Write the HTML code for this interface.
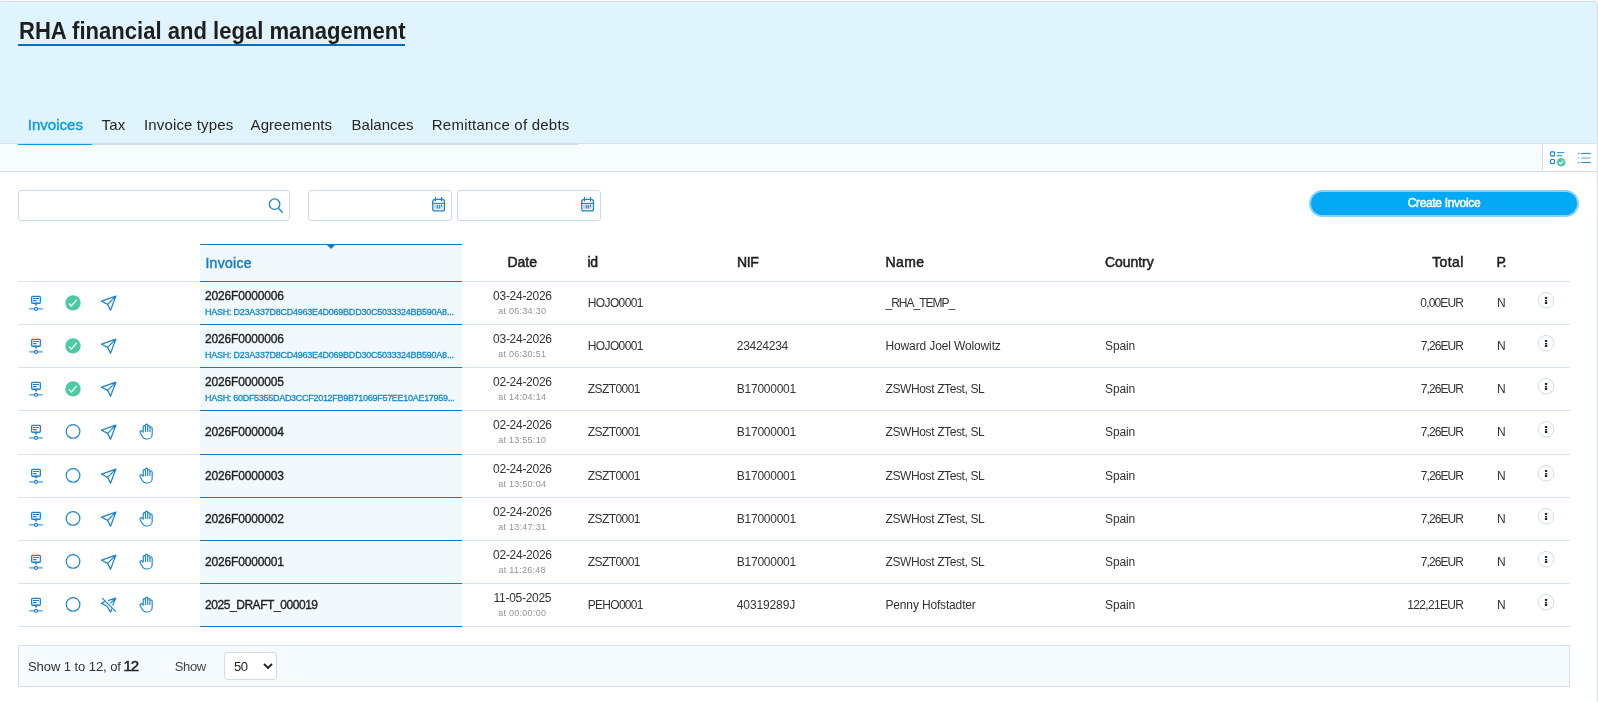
<!DOCTYPE html>
<html><head><meta charset="utf-8">
<style>
*{box-sizing:border-box;margin:0;padding:0}
html,body{width:1598px;height:702px;overflow:hidden;background:#fff;font-family:"Liberation Sans",sans-serif;color:#333}
.t{position:absolute;white-space:nowrap}
.b{position:absolute}
.s{position:absolute;overflow:visible}
#wrap{position:absolute;left:0;top:0;width:1598px;height:702px;will-change:transform}
</style></head><body><div id="wrap">
<div class="b" style="left:0;top:0;width:1598px;height:1px;background:#f7f8f8"></div>
<div class="b" style="left:-1px;top:1px;width:1599px;height:720px;border:1px solid #d3ddeb;border-radius:3px"></div>
<div class="b" style="left:0;top:2px;width:1597px;height:142px;background:#e0f4fd;border-radius:2px 2px 0 0"></div>
<div class="b" style="left:0;top:144px;width:1597px;height:27px;background:#f7fcff"></div>
<div class="b" style="left:0;top:171px;width:1597px;height:1px;background:#d3ddeb"></div>
<div class="b" style="left:1542px;top:144px;width:55px;height:27px;background:#fff;border-left:1px solid #d3ddeb"></div>
<div class="t" style="top:18.68px;font-size:24px;line-height:24px;font-weight:bold;color:#1e1e1e;left:19px;transform:scaleX(0.919);transform-origin:0 0;">RHA financial and legal management</div>
<div class="b" style="left:18px;top:44px;width:387px;height:2px;background:#0b6ebc"></div>
<div class="b" style="left:0;top:143px;width:1597px;height:1px;background:#d8e1ee"></div>
<div class="b" style="left:18px;top:143px;width:560px;height:2px;background:#d3deec"></div>
<div class="b" style="left:18px;top:144px;width:74px;height:1px;background:#119be4"></div>
<div class="b" style="left:18px;top:145px;width:74px;height:1px;background:#fff"></div>
<div class="t" style="top:117.00px;font-size:15px;line-height:15px;-webkit-text-stroke:0.45px #119be4;color:#119be4;letter-spacing:0.04px;left:27.7px;">Invoices</div>
<div class="t" style="top:117.00px;font-size:15px;line-height:15px;color:#262626;letter-spacing:0.1px;left:101.6px;">Tax</div>
<div class="t" style="top:117.00px;font-size:15px;line-height:15px;color:#262626;letter-spacing:0.14px;left:144px;">Invoice types</div>
<div class="t" style="top:117.00px;font-size:15px;line-height:15px;color:#262626;letter-spacing:0.06px;left:250.6px;">Agreements</div>
<div class="t" style="top:117.00px;font-size:15px;line-height:15px;color:#262626;letter-spacing:0.04px;left:351.5px;">Balances</div>
<div class="t" style="top:117.00px;font-size:15px;line-height:15px;color:#262626;letter-spacing:0.23px;left:431.8px;">Remittance of debts</div>
<svg class="s" style="left:1548px;top:149px" width="18" height="18" viewBox="0 0 18 18"><rect x="2.5" y="2.9" width="4" height="4" rx="0.9" fill="none" stroke="#1a84cf" stroke-width="1.2"/><rect x="2.5" y="10.5" width="4" height="4" rx="0.9" fill="none" stroke="#1a84cf" stroke-width="1.2"/><path d="M9 3.7 H16.3 M9 6.7 H14" stroke="#1a84cf" stroke-width="1"/><circle cx="13.1" cy="13.2" r="4.3" fill="#4ccaa3"/><path d="M10.9 13.3 L12.5 14.9 L15.3 11.8" fill="none" stroke="#fff" stroke-width="1.3"/></svg>
<svg class="s" style="left:1576px;top:149px" width="18" height="18" viewBox="0 0 18 18"><path d="M2 4.4 H3.3 M2 13.5 H3.3" stroke="#1a84cf" stroke-width="1"/><path d="M5.3 4.4 H14.7 M5.3 13.5 H14.7" stroke="#1a84cf" stroke-width="1"/><path d="M2 9 H3.3 M5.3 9 H14.7" stroke="#5aa8e0" stroke-width="1"/></svg>
<div class="b" style="left:18px;top:190px;width:272px;height:31px;border:1px solid #c9d9ef;border-radius:3px;background:#fff"></div>
<svg class="s" style="left:267px;top:197px" width="18" height="18" viewBox="0 0 18 18"><circle cx="7.6" cy="7.2" r="5.25" fill="none" stroke="#1a84cf" stroke-width="1.3"/><path d="M11.6 11.6 L15.7 15.7" stroke="#1a84cf" stroke-width="1.4"/></svg>
<div class="b" style="left:308px;top:190px;width:144px;height:31px;border:1px solid #c9d9ef;border-radius:3px;background:#fff"></div>
<svg class="s" style="left:430px;top:196px" width="17" height="17" viewBox="0 0 17 17"><rect x="2.75" y="3.35" width="11.7" height="11.6" rx="2.3" fill="none" stroke="#1a84cf" stroke-width="1.3"/><path d="M5.5 1.1 V5.5 M11.5 1.1 V5.5" stroke="#1a84cf" stroke-width="1.2"/><path d="M2.5 7.4 H14.7" stroke="#1a84cf" stroke-width="1.1"/><rect x="3.6" y="8.7" width="9.1" height="4" fill="#b5d8f1"/><path d="M7.4 8.7 V12.7 M9.4 8.7 V12.7 M11.5 8.7 V10.8" stroke="#1a84cf" stroke-width="0.9"/></svg>
<div class="b" style="left:457px;top:190px;width:144px;height:31px;border:1px solid #c9d9ef;border-radius:3px;background:#fff"></div>
<svg class="s" style="left:579px;top:196px" width="17" height="17" viewBox="0 0 17 17"><rect x="2.75" y="3.35" width="11.7" height="11.6" rx="2.3" fill="none" stroke="#1a84cf" stroke-width="1.3"/><path d="M5.5 1.1 V5.5 M11.5 1.1 V5.5" stroke="#1a84cf" stroke-width="1.2"/><path d="M2.5 7.4 H14.7" stroke="#1a84cf" stroke-width="1.1"/><rect x="3.6" y="8.7" width="9.1" height="4" fill="#b5d8f1"/><path d="M7.4 8.7 V12.7 M9.4 8.7 V12.7 M11.5 8.7 V10.8" stroke="#1a84cf" stroke-width="0.9"/></svg>
<div class="b" style="left:1309px;top:190px;width:270px;height:27px;border-radius:14px;background:#03a9f4;border:2px solid #86d3f9"></div>
<div class="t" style="top:196.84px;font-size:12px;line-height:12px;-webkit-text-stroke:0.5px #fff;color:#fff;letter-spacing:-0.35px;left:1294px;width:300px;text-align:center;">Create Invoice</div>
<div class="b" style="left:200px;top:244px;width:262px;height:383px;background:#f1f9fd"></div>
<div class="b" style="left:200px;top:244px;width:262px;height:1px;background:#1b78c0"></div>
<div class="b" style="left:18px;top:281px;width:182px;height:1px;background:#d7e2f2"></div>
<div class="b" style="left:200px;top:281px;width:262px;height:1px;background:#1b78c0"></div>
<div class="b" style="left:462px;top:281px;width:1108px;height:1px;background:#d7e2f2"></div>
<div class="b" style="left:18px;top:324px;width:182px;height:1px;background:#d7e2f2"></div>
<div class="b" style="left:200px;top:324px;width:262px;height:1px;background:#1b78c0"></div>
<div class="b" style="left:462px;top:324px;width:1108px;height:1px;background:#d7e2f2"></div>
<div class="b" style="left:18px;top:367px;width:182px;height:1px;background:#d7e2f2"></div>
<div class="b" style="left:200px;top:367px;width:262px;height:1px;background:#1b78c0"></div>
<div class="b" style="left:462px;top:367px;width:1108px;height:1px;background:#d7e2f2"></div>
<div class="b" style="left:18px;top:410px;width:182px;height:1px;background:#d7e2f2"></div>
<div class="b" style="left:200px;top:410px;width:262px;height:1px;background:#1b78c0"></div>
<div class="b" style="left:462px;top:410px;width:1108px;height:1px;background:#d7e2f2"></div>
<div class="b" style="left:18px;top:454px;width:182px;height:1px;background:#d7e2f2"></div>
<div class="b" style="left:200px;top:454px;width:262px;height:1px;background:#1b78c0"></div>
<div class="b" style="left:462px;top:454px;width:1108px;height:1px;background:#d7e2f2"></div>
<div class="b" style="left:18px;top:497px;width:182px;height:1px;background:#d7e2f2"></div>
<div class="b" style="left:200px;top:497px;width:262px;height:1px;background:#1b78c0"></div>
<div class="b" style="left:462px;top:497px;width:1108px;height:1px;background:#d7e2f2"></div>
<div class="b" style="left:18px;top:540px;width:182px;height:1px;background:#d7e2f2"></div>
<div class="b" style="left:200px;top:540px;width:262px;height:1px;background:#1b78c0"></div>
<div class="b" style="left:462px;top:540px;width:1108px;height:1px;background:#d7e2f2"></div>
<div class="b" style="left:18px;top:583px;width:182px;height:1px;background:#d7e2f2"></div>
<div class="b" style="left:200px;top:583px;width:262px;height:1px;background:#1b78c0"></div>
<div class="b" style="left:462px;top:583px;width:1108px;height:1px;background:#d7e2f2"></div>
<div class="b" style="left:18px;top:626px;width:182px;height:1px;background:#d7e2f2"></div>
<div class="b" style="left:200px;top:626px;width:262px;height:1px;background:#1b78c0"></div>
<div class="b" style="left:462px;top:626px;width:1108px;height:1px;background:#d7e2f2"></div>
<div class="b" style="left:327px;top:245px;width:0;height:0;border-left:4px solid transparent;border-right:4px solid transparent;border-top:4px solid #1b78c0"></div>
<div class="t" style="top:255.95px;font-size:14px;line-height:14px;-webkit-text-stroke:0.5px #1b7ec4;color:#1b7ec4;letter-spacing:0.3px;left:205.4px;">Invoice</div>
<div class="t" style="top:255.15px;font-size:14px;line-height:14px;-webkit-text-stroke:0.5px #222;color:#222;left:372.20000000000005px;width:300px;text-align:center;">Date</div>
<div class="t" style="top:255.15px;font-size:14px;line-height:14px;-webkit-text-stroke:0.5px #222;color:#222;letter-spacing:-0.3px;left:587.5px;">id</div>
<div class="t" style="top:255.15px;font-size:14px;line-height:14px;-webkit-text-stroke:0.5px #222;color:#222;letter-spacing:-0.35px;left:737px;">NIF</div>
<div class="t" style="top:255.15px;font-size:14px;line-height:14px;-webkit-text-stroke:0.5px #222;color:#222;letter-spacing:0.4px;left:885.6px;">Name</div>
<div class="t" style="top:255.15px;font-size:14px;line-height:14px;-webkit-text-stroke:0.5px #222;color:#222;letter-spacing:-0.05px;left:1105px;">Country</div>
<div class="t" style="top:255.15px;font-size:14px;line-height:14px;-webkit-text-stroke:0.5px #222;color:#222;letter-spacing:0.38px;right:134.30px;">Total</div>
<div class="t" style="top:255.15px;font-size:14px;line-height:14px;-webkit-text-stroke:0.5px #222;color:#222;letter-spacing:-1.5px;left:1496.5px;">P.</div>
<svg class="s" style="left:28px;top:293.00px" width="20" height="20" viewBox="0 0 20 20"><rect x="3.65" y="3.35" width="8.7" height="6.9" rx="0.9" fill="none" stroke="#1a84cf" stroke-width="1.3"/><path d="M6.3 10.2 L8 12.6 L9.7 10.2 Z" fill="#1a84cf" stroke="#1a84cf" stroke-width="0.6" stroke-linejoin="round"/><path d="M5 5.5 H10.9 M5 7.6 H8.7" stroke="#1a84cf" stroke-width="1.1"/><path d="M1.1 15.9 H6.5 M9.5 15.9 H14.9" stroke="#1a84cf" stroke-width="1.4" opacity="0.8"/><circle cx="8" cy="15.9" r="1.45" fill="none" stroke="#1a84cf" stroke-width="1.2"/></svg>
<svg class="s" style="left:65px;top:293.00px" width="20" height="20" viewBox="0 0 20 20"><circle cx="8" cy="9.9" r="7.7" fill="#4ccaa3"/><path d="M4.05 10.6 L6.4 13 L11.7 6.8" fill="none" stroke="#fff" stroke-width="1.3"/></svg>
<svg class="s" style="left:100px;top:293.00px" width="20" height="20" viewBox="0 0 20 20"><path d="M15.9 3.1 L1.6 8.2 L7.6 11.4 L10.5 17.2 Z M7.6 11.4 L15.9 3.1" fill="none" stroke="#1a84cf" stroke-width="1.25" stroke-linejoin="round"/></svg>
<div class="t" style="top:290.44px;font-size:12px;line-height:12px;-webkit-text-stroke:0.35px #222;color:#222;letter-spacing:-0.16px;left:205px;">2026F0000006</div>
<div class="t" style="top:307.58px;font-size:9px;line-height:9px;-webkit-text-stroke:0.3px #1a87cf;color:#1a87cf;letter-spacing:-0.24px;left:205px;">HASH: D23A337D8CD4963E4D069BDD30C5033324BB590A8...</div>
<div class="t" style="top:289.54px;font-size:12px;line-height:12px;color:#333;letter-spacing:-0.28px;left:372.4px;width:300px;text-align:center;">03-24-2026</div>
<div class="t" style="top:306.78px;font-size:9px;line-height:9px;color:#939393;letter-spacing:0.27px;left:372.20000000000005px;width:300px;text-align:center;">at 06:34:30</div>
<div class="t" style="top:297.24px;font-size:12px;line-height:12px;color:#333;letter-spacing:-0.6px;left:587.7px;">HOJO0001</div>
<div class="t" style="top:297.24px;font-size:12px;line-height:12px;color:#333;letter-spacing:-1.0px;left:885.5px;">_RHA_TEMP_</div>
<div class="t" style="top:297.24px;font-size:12px;line-height:12px;color:#333;letter-spacing:-0.83px;right:134.83px;">0,00EUR</div>
<div class="t" style="top:297.24px;font-size:12px;line-height:12px;color:#333;left:1497px;">N</div>
<svg class="s" style="left:1536px;top:290px" width="20" height="20" viewBox="0 0 20 20"><circle cx="10" cy="10.3" r="7.75" fill="none" stroke="#cddbee" stroke-width="1"/><rect x="8.9" y="7" width="2.3" height="2" rx="0.4" fill="#222"/><rect x="8.9" y="10" width="2.3" height="1.6" rx="0.4" fill="#222"/><rect x="8.9" y="12.1" width="2.3" height="2" rx="0.4" fill="#222"/></svg>
<svg class="s" style="left:28px;top:336.00px" width="20" height="20" viewBox="0 0 20 20"><rect x="3.65" y="3.35" width="8.7" height="6.9" rx="0.9" fill="none" stroke="#1a84cf" stroke-width="1.3"/><path d="M6.3 10.2 L8 12.6 L9.7 10.2 Z" fill="#1a84cf" stroke="#1a84cf" stroke-width="0.6" stroke-linejoin="round"/><path d="M5 5.5 H10.9 M5 7.6 H8.7" stroke="#1a84cf" stroke-width="1.1"/><path d="M1.1 15.9 H6.5 M9.5 15.9 H14.9" stroke="#1a84cf" stroke-width="1.4" opacity="0.8"/><circle cx="8" cy="15.9" r="1.45" fill="none" stroke="#1a84cf" stroke-width="1.2"/></svg>
<svg class="s" style="left:65px;top:336.00px" width="20" height="20" viewBox="0 0 20 20"><circle cx="8" cy="9.9" r="7.7" fill="#4ccaa3"/><path d="M4.05 10.6 L6.4 13 L11.7 6.8" fill="none" stroke="#fff" stroke-width="1.3"/></svg>
<svg class="s" style="left:100px;top:336.00px" width="20" height="20" viewBox="0 0 20 20"><path d="M15.9 3.1 L1.6 8.2 L7.6 11.4 L10.5 17.2 Z M7.6 11.4 L15.9 3.1" fill="none" stroke="#1a84cf" stroke-width="1.25" stroke-linejoin="round"/></svg>
<div class="t" style="top:333.44px;font-size:12px;line-height:12px;-webkit-text-stroke:0.35px #222;color:#222;letter-spacing:-0.16px;left:205px;">2026F0000006</div>
<div class="t" style="top:350.58px;font-size:9px;line-height:9px;-webkit-text-stroke:0.3px #1a87cf;color:#1a87cf;letter-spacing:-0.24px;left:205px;">HASH: D23A337D8CD4963E4D069BDD30C5033324BB590A8...</div>
<div class="t" style="top:332.54px;font-size:12px;line-height:12px;color:#333;letter-spacing:-0.28px;left:372.4px;width:300px;text-align:center;">03-24-2026</div>
<div class="t" style="top:349.78px;font-size:9px;line-height:9px;color:#939393;letter-spacing:0.27px;left:372.20000000000005px;width:300px;text-align:center;">at 06:30:51</div>
<div class="t" style="top:340.24px;font-size:12px;line-height:12px;color:#333;letter-spacing:-0.6px;left:587.7px;">HOJO0001</div>
<div class="t" style="top:340.24px;font-size:12px;line-height:12px;color:#333;letter-spacing:-0.28px;left:736.8px;">23424234</div>
<div class="t" style="top:340.24px;font-size:12px;line-height:12px;color:#333;letter-spacing:-0.13px;left:885.5px;">Howard Joel Wolowitz</div>
<div class="t" style="top:340.24px;font-size:12px;line-height:12px;color:#333;letter-spacing:-0.1px;left:1105px;">Spain</div>
<div class="t" style="top:340.24px;font-size:12px;line-height:12px;color:#333;letter-spacing:-0.9px;right:134.90px;">7,26EUR</div>
<div class="t" style="top:340.24px;font-size:12px;line-height:12px;color:#333;left:1497px;">N</div>
<svg class="s" style="left:1536px;top:333px" width="20" height="20" viewBox="0 0 20 20"><circle cx="10" cy="10.3" r="7.75" fill="none" stroke="#cddbee" stroke-width="1"/><rect x="8.9" y="7" width="2.3" height="2" rx="0.4" fill="#222"/><rect x="8.9" y="10" width="2.3" height="1.6" rx="0.4" fill="#222"/><rect x="8.9" y="12.1" width="2.3" height="2" rx="0.4" fill="#222"/></svg>
<svg class="s" style="left:28px;top:379.00px" width="20" height="20" viewBox="0 0 20 20"><rect x="3.65" y="3.35" width="8.7" height="6.9" rx="0.9" fill="none" stroke="#1a84cf" stroke-width="1.3"/><path d="M6.3 10.2 L8 12.6 L9.7 10.2 Z" fill="#1a84cf" stroke="#1a84cf" stroke-width="0.6" stroke-linejoin="round"/><path d="M5 5.5 H10.9 M5 7.6 H8.7" stroke="#1a84cf" stroke-width="1.1"/><path d="M1.1 15.9 H6.5 M9.5 15.9 H14.9" stroke="#1a84cf" stroke-width="1.4" opacity="0.8"/><circle cx="8" cy="15.9" r="1.45" fill="none" stroke="#1a84cf" stroke-width="1.2"/></svg>
<svg class="s" style="left:65px;top:379.00px" width="20" height="20" viewBox="0 0 20 20"><circle cx="8" cy="9.9" r="7.7" fill="#4ccaa3"/><path d="M4.05 10.6 L6.4 13 L11.7 6.8" fill="none" stroke="#fff" stroke-width="1.3"/></svg>
<svg class="s" style="left:100px;top:379.00px" width="20" height="20" viewBox="0 0 20 20"><path d="M15.9 3.1 L1.6 8.2 L7.6 11.4 L10.5 17.2 Z M7.6 11.4 L15.9 3.1" fill="none" stroke="#1a84cf" stroke-width="1.25" stroke-linejoin="round"/></svg>
<div class="t" style="top:376.44px;font-size:12px;line-height:12px;-webkit-text-stroke:0.35px #222;color:#222;letter-spacing:-0.16px;left:205px;">2026F0000005</div>
<div class="t" style="top:393.58px;font-size:9px;line-height:9px;-webkit-text-stroke:0.3px #1a87cf;color:#1a87cf;letter-spacing:-0.29px;left:205px;">HASH: 60DF5355DAD3CCF2012FB9B71069F57EE10AE17959...</div>
<div class="t" style="top:375.54px;font-size:12px;line-height:12px;color:#333;letter-spacing:-0.28px;left:372.4px;width:300px;text-align:center;">02-24-2026</div>
<div class="t" style="top:392.78px;font-size:9px;line-height:9px;color:#939393;letter-spacing:0.27px;left:372.20000000000005px;width:300px;text-align:center;">at 14:04:14</div>
<div class="t" style="top:383.24px;font-size:12px;line-height:12px;color:#333;letter-spacing:-0.55px;left:587.7px;">ZSZT0001</div>
<div class="t" style="top:383.24px;font-size:12px;line-height:12px;color:#333;letter-spacing:-0.25px;left:736.8px;">B17000001</div>
<div class="t" style="top:383.24px;font-size:12px;line-height:12px;color:#333;letter-spacing:-0.38px;left:885.5px;">ZSWHost ZTest, SL</div>
<div class="t" style="top:383.24px;font-size:12px;line-height:12px;color:#333;letter-spacing:-0.1px;left:1105px;">Spain</div>
<div class="t" style="top:383.24px;font-size:12px;line-height:12px;color:#333;letter-spacing:-0.9px;right:134.90px;">7,26EUR</div>
<div class="t" style="top:383.24px;font-size:12px;line-height:12px;color:#333;left:1497px;">N</div>
<svg class="s" style="left:1536px;top:376px" width="20" height="20" viewBox="0 0 20 20"><circle cx="10" cy="10.3" r="7.75" fill="none" stroke="#cddbee" stroke-width="1"/><rect x="8.9" y="7" width="2.3" height="2" rx="0.4" fill="#222"/><rect x="8.9" y="10" width="2.3" height="1.6" rx="0.4" fill="#222"/><rect x="8.9" y="12.1" width="2.3" height="2" rx="0.4" fill="#222"/></svg>
<svg class="s" style="left:28px;top:422.00px" width="20" height="20" viewBox="0 0 20 20"><rect x="3.65" y="3.35" width="8.7" height="6.9" rx="0.9" fill="none" stroke="#1a84cf" stroke-width="1.3"/><path d="M6.3 10.2 L8 12.6 L9.7 10.2 Z" fill="#1a84cf" stroke="#1a84cf" stroke-width="0.6" stroke-linejoin="round"/><path d="M5 5.5 H10.9 M5 7.6 H8.7" stroke="#1a84cf" stroke-width="1.1"/><path d="M1.1 15.9 H6.5 M9.5 15.9 H14.9" stroke="#1a84cf" stroke-width="1.4" opacity="0.8"/><circle cx="8" cy="15.9" r="1.45" fill="none" stroke="#1a84cf" stroke-width="1.2"/></svg>
<svg class="s" style="left:65px;top:422.00px" width="20" height="20" viewBox="0 0 20 20"><circle cx="8.05" cy="9.4" r="6.85" fill="none" stroke="#1a84cf" stroke-width="1.2"/></svg>
<svg class="s" style="left:100px;top:422.00px" width="20" height="20" viewBox="0 0 20 20"><path d="M15.9 3.1 L1.6 8.2 L7.6 11.4 L10.5 17.2 Z M7.6 11.4 L15.9 3.1" fill="none" stroke="#1a84cf" stroke-width="1.25" stroke-linejoin="round"/></svg>
<svg class="s" style="left:137px;top:422.00px" width="20" height="20" viewBox="0 0 20 20"><g transform="translate(0.26,0.57) scale(0.745)"><path d="M8 13v-7.5a1.5 1.5 0 0 1 3 0v6.5M11 5.5v-2a1.5 1.5 0 1 1 3 0v8.5M14 5.5a1.5 1.5 0 0 1 3 0v6.5M17 7.5a1.5 1.5 0 0 1 3 0v8.5a6 6 0 0 1 -6 6h-2h.208a6 6 0 0 1 -5.012 -2.7a69.74 69.74 0 0 1 -.196 -.3c-.312 -.479 -1.407 -2.388 -3.286 -5.728a1.5 1.5 0 0 1 .536 -2.022a1.867 1.867 0 0 1 2.28 .28l1.47 1.47" fill="none" stroke="#1a84cf" stroke-width="1.55" stroke-linecap="round" stroke-linejoin="round"/></g></svg>
<div class="t" style="top:426.24px;font-size:12px;line-height:12px;-webkit-text-stroke:0.35px #222;color:#222;letter-spacing:-0.16px;left:205px;">2026F0000004</div>
<div class="t" style="top:418.54px;font-size:12px;line-height:12px;color:#333;letter-spacing:-0.28px;left:372.4px;width:300px;text-align:center;">02-24-2026</div>
<div class="t" style="top:435.78px;font-size:9px;line-height:9px;color:#939393;letter-spacing:0.27px;left:372.20000000000005px;width:300px;text-align:center;">at 13:55:10</div>
<div class="t" style="top:426.24px;font-size:12px;line-height:12px;color:#333;letter-spacing:-0.55px;left:587.7px;">ZSZT0001</div>
<div class="t" style="top:426.24px;font-size:12px;line-height:12px;color:#333;letter-spacing:-0.25px;left:736.8px;">B17000001</div>
<div class="t" style="top:426.24px;font-size:12px;line-height:12px;color:#333;letter-spacing:-0.38px;left:885.5px;">ZSWHost ZTest, SL</div>
<div class="t" style="top:426.24px;font-size:12px;line-height:12px;color:#333;letter-spacing:-0.1px;left:1105px;">Spain</div>
<div class="t" style="top:426.24px;font-size:12px;line-height:12px;color:#333;letter-spacing:-0.9px;right:134.90px;">7,26EUR</div>
<div class="t" style="top:426.24px;font-size:12px;line-height:12px;color:#333;left:1497px;">N</div>
<svg class="s" style="left:1536px;top:419px" width="20" height="20" viewBox="0 0 20 20"><circle cx="10" cy="10.3" r="7.75" fill="none" stroke="#cddbee" stroke-width="1"/><rect x="8.9" y="7" width="2.3" height="2" rx="0.4" fill="#222"/><rect x="8.9" y="10" width="2.3" height="1.6" rx="0.4" fill="#222"/><rect x="8.9" y="12.1" width="2.3" height="2" rx="0.4" fill="#222"/></svg>
<svg class="s" style="left:28px;top:466.00px" width="20" height="20" viewBox="0 0 20 20"><rect x="3.65" y="3.35" width="8.7" height="6.9" rx="0.9" fill="none" stroke="#1a84cf" stroke-width="1.3"/><path d="M6.3 10.2 L8 12.6 L9.7 10.2 Z" fill="#1a84cf" stroke="#1a84cf" stroke-width="0.6" stroke-linejoin="round"/><path d="M5 5.5 H10.9 M5 7.6 H8.7" stroke="#1a84cf" stroke-width="1.1"/><path d="M1.1 15.9 H6.5 M9.5 15.9 H14.9" stroke="#1a84cf" stroke-width="1.4" opacity="0.8"/><circle cx="8" cy="15.9" r="1.45" fill="none" stroke="#1a84cf" stroke-width="1.2"/></svg>
<svg class="s" style="left:65px;top:466.00px" width="20" height="20" viewBox="0 0 20 20"><circle cx="8.05" cy="9.4" r="6.85" fill="none" stroke="#1a84cf" stroke-width="1.2"/></svg>
<svg class="s" style="left:100px;top:466.00px" width="20" height="20" viewBox="0 0 20 20"><path d="M15.9 3.1 L1.6 8.2 L7.6 11.4 L10.5 17.2 Z M7.6 11.4 L15.9 3.1" fill="none" stroke="#1a84cf" stroke-width="1.25" stroke-linejoin="round"/></svg>
<svg class="s" style="left:137px;top:466.00px" width="20" height="20" viewBox="0 0 20 20"><g transform="translate(0.26,0.57) scale(0.745)"><path d="M8 13v-7.5a1.5 1.5 0 0 1 3 0v6.5M11 5.5v-2a1.5 1.5 0 1 1 3 0v8.5M14 5.5a1.5 1.5 0 0 1 3 0v6.5M17 7.5a1.5 1.5 0 0 1 3 0v8.5a6 6 0 0 1 -6 6h-2h.208a6 6 0 0 1 -5.012 -2.7a69.74 69.74 0 0 1 -.196 -.3c-.312 -.479 -1.407 -2.388 -3.286 -5.728a1.5 1.5 0 0 1 .536 -2.022a1.867 1.867 0 0 1 2.28 .28l1.47 1.47" fill="none" stroke="#1a84cf" stroke-width="1.55" stroke-linecap="round" stroke-linejoin="round"/></g></svg>
<div class="t" style="top:470.24px;font-size:12px;line-height:12px;-webkit-text-stroke:0.35px #222;color:#222;letter-spacing:-0.16px;left:205px;">2026F0000003</div>
<div class="t" style="top:462.54px;font-size:12px;line-height:12px;color:#333;letter-spacing:-0.28px;left:372.4px;width:300px;text-align:center;">02-24-2026</div>
<div class="t" style="top:479.78px;font-size:9px;line-height:9px;color:#939393;letter-spacing:0.27px;left:372.20000000000005px;width:300px;text-align:center;">at 13:50:04</div>
<div class="t" style="top:470.24px;font-size:12px;line-height:12px;color:#333;letter-spacing:-0.55px;left:587.7px;">ZSZT0001</div>
<div class="t" style="top:470.24px;font-size:12px;line-height:12px;color:#333;letter-spacing:-0.25px;left:736.8px;">B17000001</div>
<div class="t" style="top:470.24px;font-size:12px;line-height:12px;color:#333;letter-spacing:-0.38px;left:885.5px;">ZSWHost ZTest, SL</div>
<div class="t" style="top:470.24px;font-size:12px;line-height:12px;color:#333;letter-spacing:-0.1px;left:1105px;">Spain</div>
<div class="t" style="top:470.24px;font-size:12px;line-height:12px;color:#333;letter-spacing:-0.9px;right:134.90px;">7,26EUR</div>
<div class="t" style="top:470.24px;font-size:12px;line-height:12px;color:#333;left:1497px;">N</div>
<svg class="s" style="left:1536px;top:463px" width="20" height="20" viewBox="0 0 20 20"><circle cx="10" cy="10.3" r="7.75" fill="none" stroke="#cddbee" stroke-width="1"/><rect x="8.9" y="7" width="2.3" height="2" rx="0.4" fill="#222"/><rect x="8.9" y="10" width="2.3" height="1.6" rx="0.4" fill="#222"/><rect x="8.9" y="12.1" width="2.3" height="2" rx="0.4" fill="#222"/></svg>
<svg class="s" style="left:28px;top:509.00px" width="20" height="20" viewBox="0 0 20 20"><rect x="3.65" y="3.35" width="8.7" height="6.9" rx="0.9" fill="none" stroke="#1a84cf" stroke-width="1.3"/><path d="M6.3 10.2 L8 12.6 L9.7 10.2 Z" fill="#1a84cf" stroke="#1a84cf" stroke-width="0.6" stroke-linejoin="round"/><path d="M5 5.5 H10.9 M5 7.6 H8.7" stroke="#1a84cf" stroke-width="1.1"/><path d="M1.1 15.9 H6.5 M9.5 15.9 H14.9" stroke="#1a84cf" stroke-width="1.4" opacity="0.8"/><circle cx="8" cy="15.9" r="1.45" fill="none" stroke="#1a84cf" stroke-width="1.2"/></svg>
<svg class="s" style="left:65px;top:509.00px" width="20" height="20" viewBox="0 0 20 20"><circle cx="8.05" cy="9.4" r="6.85" fill="none" stroke="#1a84cf" stroke-width="1.2"/></svg>
<svg class="s" style="left:100px;top:509.00px" width="20" height="20" viewBox="0 0 20 20"><path d="M15.9 3.1 L1.6 8.2 L7.6 11.4 L10.5 17.2 Z M7.6 11.4 L15.9 3.1" fill="none" stroke="#1a84cf" stroke-width="1.25" stroke-linejoin="round"/></svg>
<svg class="s" style="left:137px;top:509.00px" width="20" height="20" viewBox="0 0 20 20"><g transform="translate(0.26,0.57) scale(0.745)"><path d="M8 13v-7.5a1.5 1.5 0 0 1 3 0v6.5M11 5.5v-2a1.5 1.5 0 1 1 3 0v8.5M14 5.5a1.5 1.5 0 0 1 3 0v6.5M17 7.5a1.5 1.5 0 0 1 3 0v8.5a6 6 0 0 1 -6 6h-2h.208a6 6 0 0 1 -5.012 -2.7a69.74 69.74 0 0 1 -.196 -.3c-.312 -.479 -1.407 -2.388 -3.286 -5.728a1.5 1.5 0 0 1 .536 -2.022a1.867 1.867 0 0 1 2.28 .28l1.47 1.47" fill="none" stroke="#1a84cf" stroke-width="1.55" stroke-linecap="round" stroke-linejoin="round"/></g></svg>
<div class="t" style="top:513.24px;font-size:12px;line-height:12px;-webkit-text-stroke:0.35px #222;color:#222;letter-spacing:-0.16px;left:205px;">2026F0000002</div>
<div class="t" style="top:505.54px;font-size:12px;line-height:12px;color:#333;letter-spacing:-0.28px;left:372.4px;width:300px;text-align:center;">02-24-2026</div>
<div class="t" style="top:522.78px;font-size:9px;line-height:9px;color:#939393;letter-spacing:0.27px;left:372.20000000000005px;width:300px;text-align:center;">at 13:47:31</div>
<div class="t" style="top:513.24px;font-size:12px;line-height:12px;color:#333;letter-spacing:-0.55px;left:587.7px;">ZSZT0001</div>
<div class="t" style="top:513.24px;font-size:12px;line-height:12px;color:#333;letter-spacing:-0.25px;left:736.8px;">B17000001</div>
<div class="t" style="top:513.24px;font-size:12px;line-height:12px;color:#333;letter-spacing:-0.38px;left:885.5px;">ZSWHost ZTest, SL</div>
<div class="t" style="top:513.24px;font-size:12px;line-height:12px;color:#333;letter-spacing:-0.1px;left:1105px;">Spain</div>
<div class="t" style="top:513.24px;font-size:12px;line-height:12px;color:#333;letter-spacing:-0.9px;right:134.90px;">7,26EUR</div>
<div class="t" style="top:513.24px;font-size:12px;line-height:12px;color:#333;left:1497px;">N</div>
<svg class="s" style="left:1536px;top:506px" width="20" height="20" viewBox="0 0 20 20"><circle cx="10" cy="10.3" r="7.75" fill="none" stroke="#cddbee" stroke-width="1"/><rect x="8.9" y="7" width="2.3" height="2" rx="0.4" fill="#222"/><rect x="8.9" y="10" width="2.3" height="1.6" rx="0.4" fill="#222"/><rect x="8.9" y="12.1" width="2.3" height="2" rx="0.4" fill="#222"/></svg>
<svg class="s" style="left:28px;top:552.00px" width="20" height="20" viewBox="0 0 20 20"><rect x="3.65" y="3.35" width="8.7" height="6.9" rx="0.9" fill="none" stroke="#1a84cf" stroke-width="1.3"/><path d="M6.3 10.2 L8 12.6 L9.7 10.2 Z" fill="#1a84cf" stroke="#1a84cf" stroke-width="0.6" stroke-linejoin="round"/><path d="M5 5.5 H10.9 M5 7.6 H8.7" stroke="#1a84cf" stroke-width="1.1"/><path d="M1.1 15.9 H6.5 M9.5 15.9 H14.9" stroke="#1a84cf" stroke-width="1.4" opacity="0.8"/><circle cx="8" cy="15.9" r="1.45" fill="none" stroke="#1a84cf" stroke-width="1.2"/></svg>
<svg class="s" style="left:65px;top:552.00px" width="20" height="20" viewBox="0 0 20 20"><circle cx="8.05" cy="9.4" r="6.85" fill="none" stroke="#1a84cf" stroke-width="1.2"/></svg>
<svg class="s" style="left:100px;top:552.00px" width="20" height="20" viewBox="0 0 20 20"><path d="M15.9 3.1 L1.6 8.2 L7.6 11.4 L10.5 17.2 Z M7.6 11.4 L15.9 3.1" fill="none" stroke="#1a84cf" stroke-width="1.25" stroke-linejoin="round"/></svg>
<svg class="s" style="left:137px;top:552.00px" width="20" height="20" viewBox="0 0 20 20"><g transform="translate(0.26,0.57) scale(0.745)"><path d="M8 13v-7.5a1.5 1.5 0 0 1 3 0v6.5M11 5.5v-2a1.5 1.5 0 1 1 3 0v8.5M14 5.5a1.5 1.5 0 0 1 3 0v6.5M17 7.5a1.5 1.5 0 0 1 3 0v8.5a6 6 0 0 1 -6 6h-2h.208a6 6 0 0 1 -5.012 -2.7a69.74 69.74 0 0 1 -.196 -.3c-.312 -.479 -1.407 -2.388 -3.286 -5.728a1.5 1.5 0 0 1 .536 -2.022a1.867 1.867 0 0 1 2.28 .28l1.47 1.47" fill="none" stroke="#1a84cf" stroke-width="1.55" stroke-linecap="round" stroke-linejoin="round"/></g></svg>
<div class="t" style="top:556.24px;font-size:12px;line-height:12px;-webkit-text-stroke:0.35px #222;color:#222;letter-spacing:-0.16px;left:205px;">2026F0000001</div>
<div class="t" style="top:548.54px;font-size:12px;line-height:12px;color:#333;letter-spacing:-0.28px;left:372.4px;width:300px;text-align:center;">02-24-2026</div>
<div class="t" style="top:565.78px;font-size:9px;line-height:9px;color:#939393;letter-spacing:0.27px;left:372.20000000000005px;width:300px;text-align:center;">at 11:26:48</div>
<div class="t" style="top:556.24px;font-size:12px;line-height:12px;color:#333;letter-spacing:-0.55px;left:587.7px;">ZSZT0001</div>
<div class="t" style="top:556.24px;font-size:12px;line-height:12px;color:#333;letter-spacing:-0.25px;left:736.8px;">B17000001</div>
<div class="t" style="top:556.24px;font-size:12px;line-height:12px;color:#333;letter-spacing:-0.38px;left:885.5px;">ZSWHost ZTest, SL</div>
<div class="t" style="top:556.24px;font-size:12px;line-height:12px;color:#333;letter-spacing:-0.1px;left:1105px;">Spain</div>
<div class="t" style="top:556.24px;font-size:12px;line-height:12px;color:#333;letter-spacing:-0.9px;right:134.90px;">7,26EUR</div>
<div class="t" style="top:556.24px;font-size:12px;line-height:12px;color:#333;left:1497px;">N</div>
<svg class="s" style="left:1536px;top:549px" width="20" height="20" viewBox="0 0 20 20"><circle cx="10" cy="10.3" r="7.75" fill="none" stroke="#cddbee" stroke-width="1"/><rect x="8.9" y="7" width="2.3" height="2" rx="0.4" fill="#222"/><rect x="8.9" y="10" width="2.3" height="1.6" rx="0.4" fill="#222"/><rect x="8.9" y="12.1" width="2.3" height="2" rx="0.4" fill="#222"/></svg>
<svg class="s" style="left:28px;top:595.00px" width="20" height="20" viewBox="0 0 20 20"><rect x="3.65" y="3.35" width="8.7" height="6.9" rx="0.9" fill="none" stroke="#1a84cf" stroke-width="1.3"/><path d="M6.3 10.2 L8 12.6 L9.7 10.2 Z" fill="#1a84cf" stroke="#1a84cf" stroke-width="0.6" stroke-linejoin="round"/><path d="M5 5.5 H10.9 M5 7.6 H8.7" stroke="#1a84cf" stroke-width="1.1"/><path d="M1.1 15.9 H6.5 M9.5 15.9 H14.9" stroke="#1a84cf" stroke-width="1.4" opacity="0.8"/><circle cx="8" cy="15.9" r="1.45" fill="none" stroke="#1a84cf" stroke-width="1.2"/></svg>
<svg class="s" style="left:65px;top:595.00px" width="20" height="20" viewBox="0 0 20 20"><circle cx="8.05" cy="9.4" r="6.85" fill="none" stroke="#1a84cf" stroke-width="1.2"/></svg>
<svg class="s" style="left:100px;top:595.00px" width="20" height="20" viewBox="0 0 20 20"><path d="M15.7 3.1 L8 5.6 M4.7 6.5 L1.6 8.4 L7.4 11.5 L10.5 17.2 L11.8 13.7 M12.7 10.6 L15.7 3.1 L10.4 8.4" fill="none" stroke="#1a84cf" stroke-width="1.25" stroke-linejoin="round"/><path d="M2.2 3.1 L15.9 16.6" stroke="#1a84cf" stroke-width="1.25"/></svg>
<svg class="s" style="left:137px;top:595.00px" width="20" height="20" viewBox="0 0 20 20"><g transform="translate(0.26,0.57) scale(0.745)"><path d="M8 13v-7.5a1.5 1.5 0 0 1 3 0v6.5M11 5.5v-2a1.5 1.5 0 1 1 3 0v8.5M14 5.5a1.5 1.5 0 0 1 3 0v6.5M17 7.5a1.5 1.5 0 0 1 3 0v8.5a6 6 0 0 1 -6 6h-2h.208a6 6 0 0 1 -5.012 -2.7a69.74 69.74 0 0 1 -.196 -.3c-.312 -.479 -1.407 -2.388 -3.286 -5.728a1.5 1.5 0 0 1 .536 -2.022a1.867 1.867 0 0 1 2.28 .28l1.47 1.47" fill="none" stroke="#1a84cf" stroke-width="1.55" stroke-linecap="round" stroke-linejoin="round"/></g></svg>
<div class="t" style="top:599.24px;font-size:12px;line-height:12px;-webkit-text-stroke:0.35px #222;color:#222;letter-spacing:-0.44px;left:205px;">2025_DRAFT_000019</div>
<div class="t" style="top:591.54px;font-size:12px;line-height:12px;color:#333;letter-spacing:-0.28px;left:372.4px;width:300px;text-align:center;">11-05-2025</div>
<div class="t" style="top:608.78px;font-size:9px;line-height:9px;color:#939393;letter-spacing:0.27px;left:372.20000000000005px;width:300px;text-align:center;">at 00:00:00</div>
<div class="t" style="top:599.24px;font-size:12px;line-height:12px;color:#333;letter-spacing:-0.7px;left:587.7px;">PEHO0001</div>
<div class="t" style="top:599.24px;font-size:12px;line-height:12px;color:#333;letter-spacing:-0.12px;left:736.8px;">40319289J</div>
<div class="t" style="top:599.24px;font-size:12px;line-height:12px;color:#333;letter-spacing:-0.16px;left:885.5px;">Penny Hofstadter</div>
<div class="t" style="top:599.24px;font-size:12px;line-height:12px;color:#333;letter-spacing:-0.1px;left:1105px;">Spain</div>
<div class="t" style="top:599.24px;font-size:12px;line-height:12px;color:#333;letter-spacing:-0.66px;right:134.66px;">122,21EUR</div>
<div class="t" style="top:599.24px;font-size:12px;line-height:12px;color:#333;left:1497px;">N</div>
<svg class="s" style="left:1536px;top:592px" width="20" height="20" viewBox="0 0 20 20"><circle cx="10" cy="10.3" r="7.75" fill="none" stroke="#cddbee" stroke-width="1"/><rect x="8.9" y="7" width="2.3" height="2" rx="0.4" fill="#222"/><rect x="8.9" y="10" width="2.3" height="1.6" rx="0.4" fill="#222"/><rect x="8.9" y="12.1" width="2.3" height="2" rx="0.4" fill="#222"/></svg>
<div class="b" style="left:18px;top:645px;width:1552px;height:42px;background:#f6fbff;border:1px solid #d3def0"></div>
<div class="t" style="top:660.00px;font-size:13px;line-height:13px;color:#333;letter-spacing:-0.07px;left:28px;">Show 1 to 12, of</div>
<div class="t" style="top:658.30px;font-size:15px;line-height:15px;-webkit-text-stroke:0.5px #222;color:#222;letter-spacing:-1.1px;left:123.5px;">12</div>
<div class="t" style="top:659.50px;font-size:13px;line-height:13px;color:#444;letter-spacing:-0.4px;left:174.8px;">Show</div>
<div class="b" style="left:224px;top:652px;width:53px;height:28px;border:1px solid #cfdcef;border-radius:3px;background:#fff"></div>
<div class="t" style="top:660.00px;font-size:13px;line-height:13px;color:#222;letter-spacing:-0.6px;left:234px;">50</div>
<svg class="s" style="left:262px;top:662px" width="12" height="9" viewBox="0 0 12 9"><path d="M2 2 L6 6 L10 2" fill="none" stroke="#222" stroke-width="1.9"/></svg>
</div></body></html>
